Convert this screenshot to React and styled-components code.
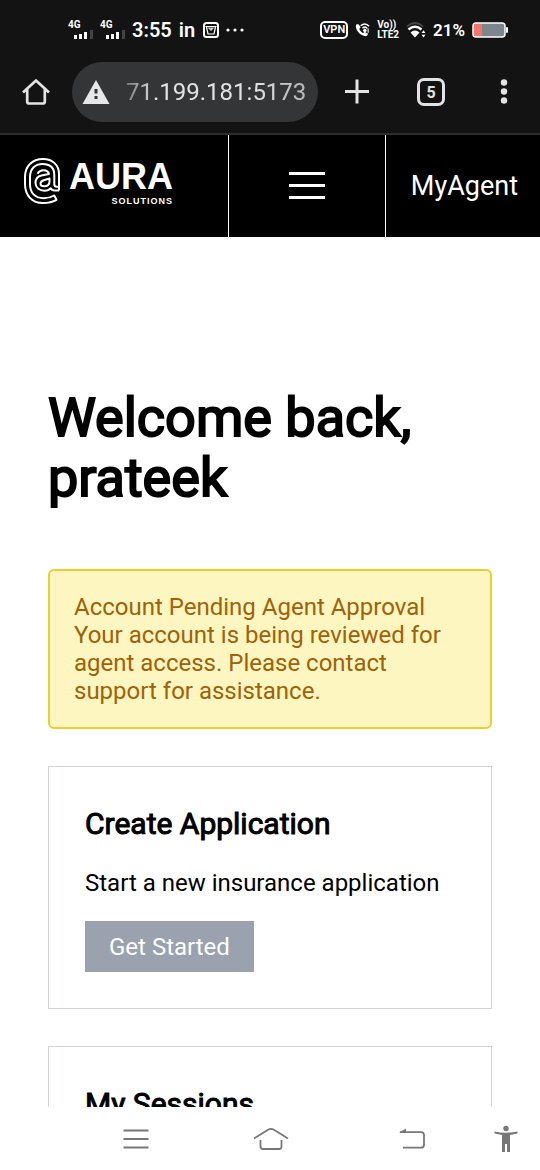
import React from "react";
import styled, { createGlobalStyle } from "styled-components";

const GlobalStyle = createGlobalStyle`
  * { box-sizing: border-box; }
  body { margin: 0; background: #fff; font-family: Roboto, "Liberation Sans", sans-serif; }
  button, input { font: inherit; color: inherit; border: 0; padding: 0; background: none; }
  button { cursor: pointer; }
  svg { display: block; flex: none; }
  h1, h2, p { margin: 0; }
`;

const Screen = styled.div`
  height: 100vh;
  display: flex;
  flex-direction: column;
`;

const Chrome = styled.div`
  flex: none;
  background: #131314;
  color: #fff;
  border-bottom: 2px solid #2c2c2c;
`;

const StatusBar = styled.div`
  height: 62px;
  padding: 0 32px 2px 68px;
  display: flex;
  align-items: center;
  justify-content: space-between;
  font-weight: 600;
  line-height: 24px;
`;

const StatusGroup = styled.div`
  display: flex;
  align-items: center;
  gap: ${(p) => p.$gap}px;
  font-size: ${(p) => p.$size}px;
`;

const SignalBox = styled.div`
  width: 25px;
  height: 20px;
  display: flex;
  flex-direction: column;
  font-size: 10px;
  line-height: 10px;
  font-weight: 700;
`;

const SignalSvg = styled.svg`
  align-self: flex-end;
`;

const VpnBadge = styled.span`
  border: 2px solid #fff;
  border-radius: 5px;
  padding: 0 1px;
  font-size: 11px;
  line-height: 14px;
`;

const Volte = styled.span`
  display: flex;
  flex-direction: column;
  font-size: 10px;
  line-height: 10px;
  font-weight: 700;
`;

const Toolbar = styled.div`
  height: 71px;
  padding: 0 22px 11px;
  display: flex;
  align-items: center;
  gap: 22px;
`;

const ToolbarActions = styled.div`
  display: flex;
  gap: 45px;
  padding-left: 4px;
`;

const IconButton = styled.button`
  width: ${(p) => p.$size || 28}px;
  height: ${(p) => p.$size || 28}px;
  display: flex;
  align-items: center;
  justify-content: center;
`;

const TabCount = styled(IconButton)`
  border: 3px solid #e3e3e3;
  border-radius: 7px;
  color: #e3e3e3;
  font-size: 16px;
  font-weight: 700;
`;

const AddressBar = styled.label`
  flex: 1;
  min-width: 0;
  height: 60px;
  padding: 0 12px 0 10px;
  display: flex;
  align-items: center;
  gap: 16px;
  border-radius: 30px;
  background: #343537;
`;

const Address = styled.input`
  flex: 1;
  min-width: 0;
  color: #e3e3e3;
  font-size: 24px;
  line-height: 28px;
  outline: 0;
  mask-image: linear-gradient(90deg, rgba(0,0,0,0.4), #000 30px, #000 70%, rgba(0,0,0,0.75));
`;

const SiteHeader = styled.header`
  flex: none;
  height: 102px;
  display: flex;
  background: #000;
  color: #fff;
`;

const HeaderCell = styled.div`
  flex: ${(p) => (p.$grow ? `${p.$grow} 1 0` : "none")};
  min-width: 0;
  display: flex;
  align-items: center;
  justify-content: ${(p) => p.$align || "center"};
  & + & { border-left: 1px solid #fff; }
`;

const Logo = styled.a`
  display: flex;
  gap: 8px;
  padding: 0 0 10px 23px;
  color: #fff;
  text-decoration: none;
  font-family: "Liberation Sans", sans-serif;
  font-weight: 700;
`;

const LogoText = styled.span`
  display: flex;
  flex-direction: column;
  align-items: flex-end;
`;

const LogoName = styled.span`
  font-size: 36px;
  line-height: 40px;
`;

const LogoTag = styled.span`
  font-size: 9px;
  line-height: 8px;
  letter-spacing: 1px;
`;

const AgentLink = styled.a`
  padding: 0 22px 0 25px;
  color: #fff;
  font-size: 27px;
  line-height: 32px;
  text-decoration: none;
`;

const Main = styled.main`
  flex: 1;
  min-height: 0;
  overflow: hidden;
  padding: 151px 48px 0;
  display: flex;
  flex-direction: column;
  gap: 37px;
  color: #000;
  & > * { flex: none; }
`;

const Title = styled.h1`
  margin-bottom: 24px;
  font-size: 54px;
  line-height: 60px;
  font-weight: 400;
  -webkit-text-stroke: 2px #000;
`;

const Notice = styled.section`
  padding: 22px 24px;
  border: 2px solid #f0cc2e;
  border-radius: 6px;
  background: #fdf6c1;
  color: #a16207;
  font-size: 24px;
  line-height: 28px;
`;

const Card = styled.section`
  padding: 36px;
  border: 1px solid #d1d5db;
  display: flex;
  flex-direction: column;
  align-items: flex-start;
`;

const CardTitle = styled.h2`
  font-size: 30px;
  line-height: 42px;
  font-weight: 400;
  -webkit-text-stroke: 1px #000;
`;

const CardText = styled.p`
  padding: 24px 0 24px;
  font-size: 24px;
  line-height: 28px;
`;

const ActionButton = styled.button`
  height: 51px;
  padding: 0 24px;
  background: #9aa1af;
  color: #fff;
  font-size: 24px;
  line-height: 28px;
`;

const SystemNav = styled.nav`
  flex: none;
  height: 63px;
  padding: 0 14px 0 68px;
  display: grid;
  grid-template-columns: 135fr 135fr 148fr 40fr;
  align-items: center;
  justify-items: center;
  background: #fff;
`;

function Signal() {
  return (
    <SignalBox>
      4G
      <SignalSvg width="19" height="9" viewBox="0 0 19 9" fill="#fff">
        <rect x="0" y="5" width="3" height="4" />
        <rect x="5" y="4" width="3" height="5" />
        <rect x="10" y="2" width="3" height="7" />
        <rect x="16" y="0" width="3" height="9" fill="#444" />
      </SignalSvg>
    </SignalBox>
  );
}

export default function App() {
  return (
    <Screen>
      <GlobalStyle />
      <Chrome>
        <StatusBar>
          <StatusGroup $gap={7} $size={20}>
            <Signal />
            <Signal />
            <span>3:55</span>
            <span>in</span>
            <svg width="17" height="16" viewBox="-1 0 17 16" fill="none" stroke="#fff">
              <rect x="1" y="1" width="14" height="14" rx="2.5" strokeWidth="2" />
              <path d="M2.500 4.500h11M3.500 5l1.500 7h6l1.500-7" strokeWidth="1.2" />
              <path d="M4.500 5.500h7L8 9Z" fill="#ccc" stroke="none" />
            </svg>
            <svg width="18" height="4" viewBox="0 0 18 4" fill="#fff">
              <circle cx="2" cy="2" r="1.6" />
              <circle cx="9" cy="2" r="1.6" />
              <circle cx="16" cy="2" r="1.6" />
            </svg>
          </StatusGroup>
          <StatusGroup $gap={7} $size={17}>
            <VpnBadge>VPN</VpnBadge>
            <svg width="15" height="16" viewBox="0 0 16 16" fill="none" stroke="#fff">
              <path d="M1 2.500 3.500 1.500l2.500 3.500-1.500 2c.8 1.800 2.200 3.200 4 4.200L10.500 10 14 12l-1.500 2.500C7 15.500 0 9 1 2.500Z" fill="#fff" stroke="none" />
              <path d="M6 3.500Q11-.5 15 4M8 6q3-2.500 5 .5" strokeWidth="1.6" />
              <path d="M9 8.500 10.500 7l1.500 1.500-1.500 1.500zM14 6.500V11" fill="#fff" strokeWidth="1.2" />
            </svg>
            <Volte><span>Vo))</span><span>LTE2</span></Volte>
            <svg width="20" height="18" viewBox="0 0 20 18" fill="none" stroke="#fff">
              <path d="M1 5.500q8-7 16 0" strokeWidth="2" stroke="#444" />
              <path d="M2.500 8.500q6.500-5.500 13 0" strokeWidth="2.600" />
              <path d="M4.500 11.500q4.500-4 9 0L9 16.500Z" fill="#fff" stroke="none" />
              <path d="m15.500 12 2-2.800 2 2.800zM15.500 13.800l2 2.800 2-2.800z" fill="#fff" stroke="none" />
            </svg>
            <span>21%</span>
            <svg width="36" height="16" viewBox="0 0 36 16">
              <rect x="1" y="1" width="32" height="14" rx="3" fill="#7d868c" stroke="#fff" strokeWidth="1.500" />
              <rect x="2" y="2" width="8" height="12" rx="1" fill="#f0776a" />
              <rect x="34" y="5" width="2" height="6" rx="1" fill="#fff" />
            </svg>
          </StatusGroup>
        </StatusBar>
        <Toolbar>
          <IconButton aria-label="Home">
            <svg width="28" height="28" viewBox="0 0 28 28" fill="none" stroke="#e3e3e3" strokeWidth="2.700" strokeLinejoin="round">
              <path d="M1 14.500 14 2.500l13 12M5.200 11.500v12a2 2 0 0 0 2 2h13.600a2 2 0 0 0 2-2v-12" />
            </svg>
          </IconButton>
          <AddressBar>
            <svg width="28" height="24" viewBox="0 0 28 24">
              <path d="M14 0 27.500 24H.5Z" fill="#e8e8e8" />
              <path d="M12.500 9h3v4.500h-3zM12.500 16h3v3h-3z" fill="#343537" />
            </svg>
            <Address aria-label="Address" readOnly value="71.199.181:5173" />
          </AddressBar>
          <ToolbarActions>
            <IconButton aria-label="New tab">
              <svg width="28" height="28" viewBox="0 0 28 28" stroke="#e3e3e3" strokeWidth="3">
                <path d="M1 13.500h24M13 1.500v24" />
              </svg>
            </IconButton>
            <TabCount>5</TabCount>
            <IconButton aria-label="More">
              <svg width="28" height="28" viewBox="0 0 28 28" fill="#e3e3e3">
                <circle cx="14" cy="4.500" r="3.200" />
                <circle cx="14" cy="13.500" r="3.200" />
                <circle cx="14" cy="22.500" r="3.200" />
              </svg>
            </IconButton>
          </ToolbarActions>
        </Toolbar>
      </Chrome>

      <SiteHeader>
        <HeaderCell $grow={229} $align="flex-start">
          <Logo href="#" aria-label="Aura Solutions">
            <svg width="38" height="48" viewBox="0 0 38 48" fill="none" stroke="#fff" strokeWidth="2" strokeLinejoin="round">
              <path d="M36 33.500V17C36 8 29.500 2 20 2 9 2 2 9.500 2 20v7C2 38.500 9 46 20 46c5.500 0 10-1.200 13.500-3.200L31.200 38.500c-3.200 1.800-6.700 2.700-10.700 2.700-8.500 0-13.500-5.500-13.500-14V20C7 12 12 7 19.500 7 27 7 31.300 11 31.300 18v9c0 2 .7 2.800 2.200 2.800H36" />
              <path d="M36 33.500h-4.500c-2 0-3.200-.8-3.800-2.300-1.400 1.800-3.500 2.600-6.200 2.600-5.300 0-9-3.200-9-8 0-4 2.500-6.800 7-7.600l6.500-1.200c-.5-2.300-2.400-3.800-5.500-3.800-2.600 0-4.600 1.200-6 3.600" />
              <path d="M26.500 21.500 21.500 23c-2.700.8-4 2-4 3.700 0 1.600 1.400 2.600 3.700 2.600 3.200 0 5.300-2 5.300-5Z" />
            </svg>
            <LogoText>
              <LogoName>AURA</LogoName>
              <LogoTag>SOLUTIONS</LogoTag>
            </LogoText>
          </Logo>
        </HeaderCell>
        <HeaderCell $grow={157}>
          <IconButton aria-label="Open menu" $size={38}>
            <svg width="38" height="30" viewBox="0 0 38 30" stroke="#fff" strokeWidth="3">
              <path d="M1 2.500h36M1 14.500h36M1 26.500h36" />
            </svg>
          </IconButton>
        </HeaderCell>
        <HeaderCell>
          <AgentLink href="#">MyAgent</AgentLink>
        </HeaderCell>
      </SiteHeader>

      <Main>
        <Title>Welcome back, prateek</Title>
        <Notice>
          <p>Account Pending Agent Approval</p>
          <p>Your account is being reviewed for agent access. Please contact support for assistance.</p>
        </Notice>
        <Card>
          <CardTitle>Create Application</CardTitle>
          <CardText>Start a new insurance application</CardText>
          <ActionButton>Get Started</ActionButton>
        </Card>
        <Card>
          <CardTitle>My Sessions</CardTitle>
        </Card>
      </Main>

      <SystemNav>
        <IconButton aria-label="Recent apps" $size={36}>
          <svg width="26" height="22" viewBox="0 0 26 22" stroke="#777" strokeWidth="1.800">
            <path d="M.5 2.500h25M.5 11h25M.5 19.500h25" />
          </svg>
        </IconButton>
        <IconButton aria-label="Home screen" $size={36}>
          <svg width="36" height="24" viewBox="0 0 36 24" fill="none" stroke="#777" strokeWidth="1.800">
            <path d="M1 11.500 15.500 2.600q2.500-1.500 5 0L35 11.500M7.500 13v6.500q0 2.500 2.500 2.500h16q2.500 0 2.500-2.500V13" />
          </svg>
        </IconButton>
        <IconButton aria-label="Back" $size={36}>
          <svg width="28" height="22" viewBox="0 0 28 22" fill="none" stroke="#777" strokeWidth="1.800">
            <path d="M2 4.200h21q3 0 3 3v9.500q0 3-3 3H5" />
            <path d="M1 4.500 8 .5v4Z" fill="#777" stroke="none" />
          </svg>
        </IconButton>
        <IconButton aria-label="Accessibility" $size={36}>
          <svg width="24" height="28" viewBox="0 0 24 28" fill="#777">
            <circle cx="12" cy="3.500" r="2.700" />
            <path d="M.5 6.500Q12 9 23.500 6.500v2L16 10v17h-3v-8h-2v8H8V10L.5 8.500Z" />
          </svg>
        </IconButton>
      </SystemNav>
    </Screen>
  );
}
